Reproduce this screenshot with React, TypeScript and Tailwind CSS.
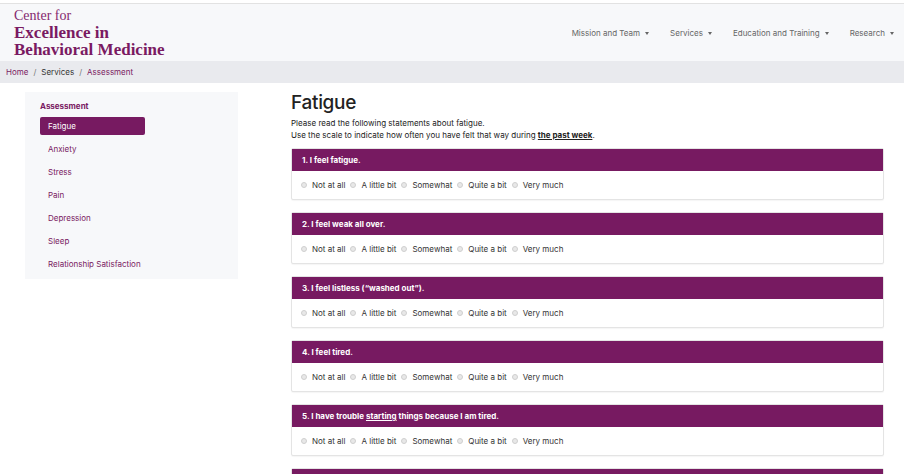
import { useState } from 'react';

const navItems = ['Mission and Team', 'Services', 'Education and Training', 'Research'];
const sideItems = ['Fatigue', 'Anxiety', 'Stress', 'Pain', 'Depression', 'Sleep', 'Relationship Satisfaction'];
const options = ['Not at all', 'A little bit', 'Somewhat', 'Quite a bit', 'Very much'];

const questions: React.ReactNode[] = [
  '1. I feel fatigue.',
  '2. I feel weak all over.',
  '3. I feel listless (“washed out”).',
  '4. I feel tired.',
  <>5. I have trouble <span className="underline">starting</span> things because I am tired.</>,
  '6. I have trouble finishing things because I am tired.',
];

function Caret() {
  return <span className="ml-[5px] inline-block border-x-[2.5px] border-t-[3px] border-x-transparent border-t-[#666] align-middle" />;
}

function Question({ label }: { label: React.ReactNode }) {
  const [val, setVal] = useState<number | null>(null);
  return (
    <div className="mb-3 rounded-[2px] border border-[#e4e4e4] bg-white shadow-[0_1px_1px_rgba(0,0,0,0.04)]">
      <div className="flex h-[22px] items-center bg-[#771a61] px-[10px] text-[8px] font-bold text-white">
        <span>{label}</span>
      </div>
      <div className="flex h-[28px] items-center gap-[5px] pl-[9px] text-[8px] text-[#333]">
        {options.map((o, i) => (
          <label key={o} className="flex cursor-pointer items-center gap-[5px]" onClick={() => setVal(i)}>
            <span className={`inline-block h-[6px] w-[6px] rounded-full border ${val === i ? 'border-[#771a61] bg-[#771a61]' : 'border-[#cfcfcf] bg-[#e8e8e8]'}`} />
            <span>{o}</span>
          </label>
        ))}
      </div>
    </div>
  );
}

export default function App() {
  return (
    <div className="h-[474px] overflow-hidden bg-white font-['Inter','Liberation_Sans',sans-serif]">
      <div className="h-[3px] bg-white" />
      <div className="border-t border-[#e2e2e2]" />
      <header className="flex h-[57px] items-start justify-between bg-[#f7f8fa] pl-[14px] pr-[10px]">
        <div className="pt-[4px] font-['Liberation_Serif',serif] text-[#7a1a62]">
          <div className="text-[14px] leading-[16px] text-[#86296f]">Center for</div>
          <div className="text-[17px] leading-[17px] font-bold">Excellence in</div>
          <div className="text-[17px] leading-[18px] font-bold">Behavioral Medicine</div>
        </div>
        <nav className="flex items-center gap-[21px] pt-[23px] text-[8px] text-[#666]">
          {navItems.map((n) => (
            <span key={n} className="flex items-center">
              {n}
              <Caret />
            </span>
          ))}
        </nav>
      </header>
      <div className="flex h-[22px] items-center bg-[#e9eaee] px-[6px] text-[8px]">
        <span className="text-[#7a1a62]">Home</span>
        <span className="px-[5px] text-[#777]">/</span>
        <span className="text-[#333]">Services</span>
        <span className="px-[5px] text-[#777]">/</span>
        <span className="text-[#7a1a62]">Assessment</span>
      </div>
      <div className="flex gap-[53px] pt-[9px]">
        <aside className="ml-[25px] h-[187px] w-[213px] shrink-0 bg-[#f7f8fa] px-[15px] pt-[8px]">
          <div className="mb-[5px] text-[8px] font-bold text-[#7a1a62]">Assessment</div>
          <ul className="flex flex-col gap-[5px] text-[8px] text-[#7a1a62]">
            {sideItems.map((s, i) => (
              <li
                key={s}
                className={`flex h-[18px] items-center whitespace-nowrap rounded-[2px] px-[8px] ${i === 0 ? 'w-[105px] bg-[#771a61] text-white' : ''}`}
              >
                {s}
              </li>
            ))}
          </ul>
        </aside>
        <main className="w-[593px]">
          <h1 className="text-[19px] leading-[22px] font-medium tracking-[-0.3px] text-[#222]">Fatigue</h1>
          <p className="mt-[3px] text-[8px] leading-[12px] text-[#222]">
            Please read the following statements about fatigue.
            <br />
            Use the scale to indicate how often you have felt that way during{' '}
            <span className="font-bold underline">the past week</span>.
          </p>
          <div className="mt-[7px]">
            {questions.map((q, i) => (
              <Question key={i} label={q} />
            ))}
          </div>
        </main>
      </div>
    </div>
  );
}
